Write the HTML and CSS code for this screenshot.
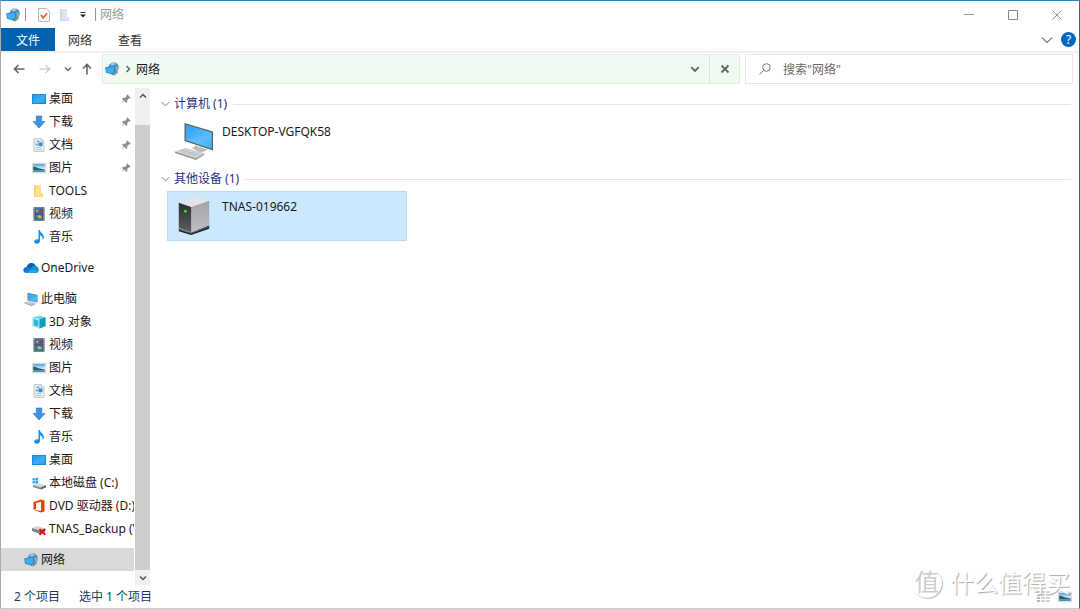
FILE: index.html
```html
<!DOCTYPE html>
<html lang="zh-CN">
<head>
<meta charset="utf-8">
<title>网络</title>
<link rel="stylesheet" href="styles.css">
</head>
<body>
<svg class="defs" aria-hidden="true">
  <defs>
    <linearGradient id="g-blue" x1="0" y1="0" x2="1" y2="1"><stop offset="0" stop-color="#1e96ea"/><stop offset=".5" stop-color="#35a9f6"/><stop offset="1" stop-color="#1787dc"/></linearGradient>
    <linearGradient id="g-screen" x1="0" y1="0" x2="1" y2="1"><stop offset="0" stop-color="#2f9ff4"/><stop offset=".6" stop-color="#55b8ff"/><stop offset="1" stop-color="#2a9cf0"/></linearGradient>
    <linearGradient id="g-front" x1="0" y1="0" x2="0" y2="1"><stop offset="0" stop-color="#2c2e30"/><stop offset="1" stop-color="#5c5e60"/></linearGradient>
    <linearGradient id="g-side" x1="0" y1="0" x2="0" y2="1"><stop offset="0" stop-color="#a3a4a8"/><stop offset="1" stop-color="#bdbec0"/></linearGradient>
    <linearGradient id="g-sky" x1="0" y1="0" x2="0" y2="1"><stop offset="0" stop-color="#4b9de0"/><stop offset=".6" stop-color="#dff2fb"/></linearGradient>
  </defs>
  <symbol id="network" viewBox="0 0 14 14">
    <circle cx="8.800" cy="5.400" r="5" fill="#5b93b3"/>
    <path d="m6 1.800 2-1 2.500.6-1.500 1.800-2.600.4z" fill="#a9cbd9"/>
    <path d="m10.500 5 2.500-.5.300 2.500-2 2z" fill="#7fb4cc"/>
    <path d="m8 10 4.500-1.200.5 1.700L9.500 13.500 6.500 12.800z" fill="#7c929e"/>
    <path d="m.2 5.600 9-2.200.8 6.200-2.600 3-6.400-1.800z" fill="#1b7cc4"/>
    <path d="m.9 6.200 7.700-1.900.7 5-2.300 2.500-5.500-1.500z" fill="#3eaef2"/>
  </symbol>
  <symbol id="desktop" viewBox="0 0 14 14"><path d="M0 2h14v10H0z" fill="#1180d3"/><path d="M.6 2.600h12.800v8.800H.6z" fill="url(#g-blue)"/><path d="M1 11 13 3v8z" fill="#55b9fa" opacity=".35"/></symbol>
  <symbol id="download" viewBox="0 0 14 14"><path d="M4.300 1h5.400v5.500H13L7 13 1 6.500h3.300z" fill="#3a94e0" stroke="#2477c5" stroke-width=".6"/></symbol>
  <symbol id="document" viewBox="0 0 14 14"><path d="M2 .6h7.300L12 3.300v10.100H2z" fill="#eef3f6" stroke="#a9b2b8" stroke-width=".7"/><path d="M9 1v3h3" fill="#dde3e7" stroke="#a9b2b8" stroke-width=".5"/><path d="M3.500 9.500h6M3.500 11.500h6" stroke="#a5b4bf" stroke-width=".7"/><path d="M6.500 4.500h4v3.700h-4z" fill="#348fc9"/><path d="M4.500 2.500h3v1.800h-3zM3.500 5.500H6v2H3.500z" fill="#67b2dd"/></symbol>
  <symbol id="picture" viewBox="0 0 14 14"><path d="M.3 2.200h13.400v9.600H.3z" fill="#fff" stroke="#b3b3b3" stroke-width=".6"/><path d="M1.200 3h11.600v8H1.200z" fill="url(#g-sky)"/><path d="M1.200 5.500c3 .3 4 1.900 11.600 3v1H1.200z" fill="#285d5c"/><path d="M1.200 9.200h11.600V11H1.200z" fill="#4793c9"/></symbol>
  <symbol id="folder" viewBox="0 0 14 14"><path d="M2 1h7v8.500h2V13H2z" fill="#f3cd68"/><path d="M3.300 1h5.700v8.500h1.500V13L3.300 12z" fill="#ffe08a"/></symbol>
  <symbol id="video" viewBox="0 0 14 14"><path d="M1.500.3h11v13.400h-11z" fill="#454b52"/><path d="M2.300 1v12M11.700 1v12" stroke="#d2d5d7" stroke-width=".9" stroke-dasharray="1.100 1"/><path d="M3.500 1h7v5.500h-7zM3.500 7.500h7V13h-7z" fill="#3b73c6"/><path d="m4 2.500 2.500 1L5 5.500zM5 9l3-1 2 2.500-3 1z" fill="#e3b240"/><path d="m7 3 3-1-.5 3.500-2 .5z" fill="#a93d29"/><path d="m3.500 11 3 0L8 13H3.500z" fill="#2b8a58"/></symbol>
  <symbol id="music" viewBox="0 0 14 14"><path d="M6.500 0h1.300c.5 3 4.200 4 4.200 7.200 0 1.200-.6 2.200-1.400 2.700.6-2.500-.6-3.700-2.600-4.600V11c0 1.600-1.400 2.800-3.200 2.800-1.600 0-2.700-.8-2.700-2 0-1.600 1.900-2.800 4.400-2.400z" fill="#1593ee"/></symbol>
  <symbol id="onedrive" viewBox="0 0 16 14"><path d="M3.500 7C3.500 4 6 2 8.500 2c2 0 3.600 1.200 4.200 3L10 9z" fill="#0864b8"/><path d="M3.800 12C1.500 12 .3 10.700.3 9c0-1.700 1.400-3.100 3.200-3.100 2 0 4.500 1.300 8 3.600L9 12z" fill="#1078d2"/><path d="M8.500 7c1-1.700 2.500-2.400 4-2.100C14.500 5 15.800 6.800 15.800 8.700c0 2-1.400 3.300-3.300 3.300H4z" fill="#1490df"/><path d="m4 12 5-3.500 6.300 2.500c-.6.700-1.500 1-2.800 1z" fill="#28a8ea"/></symbol>
  <symbol id="pc" viewBox="0 0 42 40"><path d="m11 1 30 9v20L11 20z" fill="#5b6267"/><path d="m12.300 2.800 27.400 8.400v17L12.300 19z" fill="url(#g-screen)"/><path d="m12.300 19 27.400-7v16.200z" fill="#78c7ff" opacity=".35"/><path d="m22 25 8 2.500v3L22 28z" fill="#848b8f"/><path d="m18 27 8-1 10 3-8 3.500z" fill="#b7bdc1"/><path d="m1 31 11-4 20 6-9 5.500z" fill="#d0d4d7"/><path d="m1 31 22 7 9-5v1.500L23 40 1 32.500z" fill="#92999e"/><path d="m5 31 8-2.500M9 32.500l8-2.700M14 34l8-2.700M19 35.500l7-3M8 29.800l18 5.500" stroke="#b0b6ba" stroke-width=".6"/></symbol>
  <symbol id="pc-small" viewBox="0 0 14 14"><path d="m3.500.8 10 2.200v7.500l-10-2.200z" fill="#5a7a90"/><path d="m4.100 1.500 8.800 2v6.300l-8.800-2z" fill="#3aa9f7"/><path d="m4.100 7.800 8.800-4.300v6.300z" fill="#74c6ff" opacity=".5"/><path d="m.3 10.500 4.200-1.700 7 2.300-3.700 2z" fill="#c6cdd2"/><path d="m.3 10.500 7.500 2.600 3.700-2v.8l-3.700 2L.3 11.300z" fill="#8d979e"/></symbol>
  <symbol id="cube" viewBox="0 0 14 14"><path d="M.5 2.500 7.500.5l6 1.800v8.900l-6 2.300-7-2z" fill="#6edbe5"/><path d="m.5 2.500 7 1.700v9.300l-7-2z" fill="#bceff4"/><path d="m1.600 4 4.800 1.200v6.600l-4.800-1.300z" fill="#33b8d4"/><path d="m7.500 4.200 6-1.900v8.900l-6 2.300z" fill="#0c9ec1"/></symbol>
  <symbol id="disk" viewBox="0 0 14 14"><path d="M.5 2.500 2.800 2v2.500H.5zM3.300 2l2.700-.5v3H3.300zM.5 5h2.300v2.500L.5 7.200zM3.300 5H6v3l-2.700-.4z" fill="#19b0e8"/><path d="m1 9 5-1.700 8 2L9 11.500z" fill="#d6d9db"/><path d="m1 9 8 2.500v2L1 11z" fill="#81878b"/><path d="m9 11.500 5-2.200v2l-5 2.200z" fill="#555c61"/></symbol>
  <symbol id="office" viewBox="0 0 14 14"><path d="M1.500 3 9 .5l3.500 1v11L9 13.500 1.500 11 9 11.800V2.700L4 4v6l-2.500 1z" fill="#e8420c"/></symbol>
  <symbol id="netdisk" viewBox="0 0 14 14"><path d="m0 6 5-2 8 2.500-5 2z" fill="#d4d6d8"/><path d="m0 6 8 2.500V12L0 9z" fill="#7e8286"/><path d="m8 8.500 5-2v3L8 12z" fill="#4d5256"/><path d="m7.500 7 5.800 5.800M13.300 7l-5.800 5.800" stroke="#e0151c" stroke-width="2"/></symbol>
  <symbol id="pin" viewBox="0 0 10 10"><path d="m6.200.3 3.500 3.500-1 .7-.7-.2L6.200 6.200l.1 1.700-1 1L3.200 6.800.4 9.600l2.100-3.400L1 4.700l1-.9 1.800.1L5.700 2l-.3-.8z" fill="#84919b"/></symbol>
  <symbol id="down" viewBox="0 0 8 8"><path d="m1 2.500 3 3 3-3" fill="none" stroke="currentColor" stroke-width="1.500"/></symbol>
  <symbol id="thin-down" viewBox="0 0 12 8"><path d="m1 1.500 5 5 5-5" fill="none" stroke="currentColor" stroke-width="1.300"/></symbol>
  <symbol id="arrow" viewBox="0 0 12 12"><path d="M11.500 6H1.500M5.500 2l-4 4 4 4" fill="none" stroke="currentColor" stroke-width="1.600"/></symbol>
  <symbol id="nas" viewBox="0 0 34 42"><path d="m1 34 13 4.500 19-8v4L14 41 1 37z" fill="#202224"/><path d="M1 7 20 1l13 4-19 6.500z" fill="#e5e5e8"/><path d="m14 11.500 19-6.500v26l-19 7z" fill="url(#g-side)"/><path d="m1 7 13 4.500V38L1 33.500z" fill="url(#g-front)"/><path d="m1 35 13 4 19-7" fill="none" stroke="#696b6d"/><circle cx="8" cy="16" r="1.500" fill="#24ef2c"/></symbol>
</svg>

<div class="window">
  <header class="titlebar">
    <svg class="ico"><use href="#network"/></svg>
    <i class="bar first"></i>
    <button class="flat quick" aria-label="属性"><svg class="ico" viewBox="0 0 14 14"><path d="M1.500.5h8l3 3v10h-11z" fill="#fbfbfb" stroke="#a8a8a8" stroke-width=".8"/><path d="m4 7 2.200 2.800 4-4.600" fill="none" stroke="#e8642b" stroke-width="1.700"/></svg></button>
    <button class="flat quick" aria-label="新建文件夹"><svg class="ico" viewBox="0 0 14 14"><path d="M2 1h7v8.500h2V13H2z" fill="#c9d6ea"/><path d="M3.500 1H9v8.500h1.500V13l-7-1z" fill="#dbe4f3"/></svg></button>
    <button class="flat quick menu" aria-label="自定义快速访问工具栏"><svg viewBox="0 0 8 8"><path d="M1.500 1.500h5" stroke="#333"/><path d="M1 3.500h6L4 6.500z" fill="#222"/></svg></button>
    <i class="bar"></i>
    <h1>网络</h1>
    <div class="controls">
      <button class="flat" aria-label="最小化"><svg viewBox="0 0 10 10"><path d="M0 4.500h10" stroke="#999"/></svg></button>
      <button class="flat" aria-label="最大化"><svg viewBox="0 0 10 10"><path d="M.5.5h9v9h-9z" fill="none" stroke="#888"/></svg></button>
      <button class="flat" aria-label="关闭"><svg viewBox="0 0 10 10"><path d="m.5.5 9 9M9.500.5l-9 9" stroke="#888" stroke-width=".9"/></svg></button>
    </div>
  </header>

  <nav class="ribbon">
    <button class="tab file">文件</button><button class="tab">网络</button><button class="tab">查看</button>
    <div class="ribbon-end">
      <button class="flat" aria-label="展开功能区"><svg class="expand"><use href="#thin-down"/></svg></button>
      <button class="help" aria-label="帮助">?</button>
    </div>
  </nav>

  <div class="toolbar">
    <div class="history">
      <button class="flat back" aria-label="后退"><svg><use href="#arrow"/></svg></button>
      <button class="flat forward" aria-label="前进" disabled><svg><use href="#arrow"/></svg></button>
      <button class="flat recent" aria-label="最近浏览的位置"><svg><use href="#down"/></svg></button>
      <button class="flat up" aria-label="上移"><svg><use href="#arrow"/></svg></button>
    </div>
    <div class="address">
      <svg class="ico"><use href="#network"/></svg>
      <svg class="crumb-arrow"><use href="#down"/></svg>
      <a href="#network">网络</a>
      <button class="flat drop" aria-label="以前的位置"><svg><use href="#down"/></svg></button>
      <button class="flat stop" aria-label="停止"><svg viewBox="0 0 10 10"><path d="m1.500 1.500 7 7M8.500 1.500l-7 7" stroke="#666" stroke-width="1.800"/></svg></button>
    </div>
    <label class="search">
      <svg viewBox="0 0 12 12"><circle cx="7.500" cy="4.500" r="3.800" fill="none" stroke="#777"/><path d="m4.800 7.200-4.300 4.300" stroke="#777"/></svg>
      <input type="text" placeholder="搜索&quot;网络&quot;" aria-label="搜索网络">
    </label>
  </div>

  <div class="body">
    <nav class="sidebar">
      <div class="tree">
        <ul>
          <li><a href="#"><svg class="ico"><use href="#desktop"/></svg>桌面<svg class="pin"><use href="#pin"/></svg></a></li>
          <li><a href="#"><svg class="ico"><use href="#download"/></svg>下载<svg class="pin"><use href="#pin"/></svg></a></li>
          <li><a href="#"><svg class="ico"><use href="#document"/></svg>文档<svg class="pin"><use href="#pin"/></svg></a></li>
          <li><a href="#"><svg class="ico"><use href="#picture"/></svg>图片<svg class="pin"><use href="#pin"/></svg></a></li>
          <li><a href="#"><svg class="ico"><use href="#folder"/></svg>TOOLS</a></li>
          <li><a href="#"><svg class="ico"><use href="#video"/></svg>视频</a></li>
          <li><a href="#"><svg class="ico"><use href="#music"/></svg>音乐</a></li>
        </ul>
        <ul><li class="root"><a href="#"><svg class="ico cloud"><use href="#onedrive"/></svg>OneDrive</a></li></ul>
        <ul>
          <li class="root"><a href="#"><svg class="ico"><use href="#pc-small"/></svg>此电脑</a></li>
          <li><a href="#"><svg class="ico"><use href="#cube"/></svg>3D 对象</a></li>
          <li><a href="#"><svg class="ico"><use href="#video"/></svg>视频</a></li>
          <li><a href="#"><svg class="ico"><use href="#picture"/></svg>图片</a></li>
          <li><a href="#"><svg class="ico"><use href="#document"/></svg>文档</a></li>
          <li><a href="#"><svg class="ico"><use href="#download"/></svg>下载</a></li>
          <li><a href="#"><svg class="ico"><use href="#music"/></svg>音乐</a></li>
          <li><a href="#"><svg class="ico"><use href="#desktop"/></svg>桌面</a></li>
          <li><a href="#"><svg class="ico"><use href="#disk"/></svg>本地磁盘 (C:)</a></li>
          <li><a href="#"><svg class="ico"><use href="#office"/></svg>DVD 驱动器 (D:)</a></li>
          <li><a href="#"><svg class="ico"><use href="#netdisk"/></svg>TNAS_Backup (\</a></li>
        </ul>
        <ul><li class="root current"><a href="#" aria-current="page"><svg class="ico"><use href="#network"/></svg>网络</a></li></ul>
      </div>
      <div class="scroll">
        <button class="flat scroll-up" aria-label="向上滚动"><svg><use href="#down"/></svg></button>
        <div class="thumb"></div>
        <button class="flat" aria-label="向下滚动"><svg><use href="#down"/></svg></button>
      </div>
    </nav>

    <main>
      <section>
        <h2><svg><use href="#thin-down"/></svg>计算机 (1)</h2>
        <button class="item"><svg class="big"><use href="#pc"/></svg><span>DESKTOP-VGFQK58</span></button>
      </section>
      <section>
        <h2><svg><use href="#thin-down"/></svg>其他设备 (1)</h2>
        <button class="item selected"><svg class="big"><use href="#nas"/></svg><span>TNAS-019662</span></button>
      </section>
    </main>
  </div>

  <footer>
    <span>2 个项目</span><span>选中 1 个项目</span>
    <div class="views">
      <button class="flat" aria-label="详细信息"><svg class="ico" viewBox="0 0 14 14"><path d="M1 2h3M1 5h3M1 8h3M1 11h3" stroke="#b59b91" stroke-width="1.500"/><path d="M5 2h4M10 2h4M5 5h4M10 5h4M5 8h4M10 8h4M5 11h4M10 11h4" stroke="#a9a9a9"/></svg></button>
      <button class="flat" aria-label="大缩略图"><svg class="ico"><use href="#picture"/></svg></button>
    </div>
  </footer>
  <div class="watermark"><span class="seal">值</span><span>什么值得买</span></div>
</div>
</body>
</html>
```
FILE: styles.css
```css
* { box-sizing: border-box; }
body {
  margin: 0;
  background: #fff;
  color: #1a1a1a;
  font: 12px/16px "Noto Sans", "Noto Sans CJK SC", sans-serif;
}
.defs { position: absolute; width: 0; height: 0; }
.window {
  position: relative;
  display: flex;
  flex-direction: column;
  min-height: 100vh;
  border: 1px solid #c8ccd0;
  border-top-color: #2585c4;
  border-left-color: #aaa;
  border-right-color: #2d68b4;
}
svg { display: block; flex: none; }
button, input { font: inherit; color: inherit; }
button { padding: 0; border: 0; background: none; }
a { color: inherit; text-decoration: none; }
ul { margin: 0; padding: 0; list-style: none; }
.ico { width: 14px; height: 14px; }
.flat { display: grid; place-items: center; }

.titlebar { display: flex; align-items: center; height: 27px; padding-left: 5px; }
.titlebar h1 { margin: 0 0 0 4px; font-size: 12px; font-weight: 400; color: #999; }
.bar { width: 1px; height: 13px; background: #999; }
.bar.first { margin: 0 7px 0 5px; }
.quick { width: 21px; height: 20px; }
.quick.menu { width: 16px; margin-right: 4px; }
.quick.menu svg { width: 8px; height: 8px; }
.controls { display: flex; margin-left: auto; }
.controls button { width: 44px; height: 26px; }
.controls svg { width: 10px; height: 10px; }

.ribbon { display: flex; align-items: center; height: 25px; border-bottom: 2px solid #f0f0f0; }
.tab { width: 50px; height: 23px; padding-top: 2px; color: #333; }
.tab.file { width: 54px; background: #0063b1; color: #fff; }
.ribbon-end { display: flex; align-items: center; gap: 8px; margin-left: auto; padding-right: 3px; }
.expand { width: 12px; height: 8px; color: #888; }
.help { width: 15px; height: 15px; border-radius: 50%; background: #0067c0; color: #fff; line-height: 15px; }

.toolbar { display: flex; gap: 5px; height: 34px; padding: 1px 6px 3px 0; color: #666; }
.history { display: flex; align-items: center; width: 96px; padding-left: 5px; }
.history .flat { width: 27px; height: 24px; }
.history svg { width: 12px; height: 12px; }
.history .recent { width: 20px; }
.history .up { width: 20px; }
.forward { color: #d0d0d0; }
.forward svg { transform: rotate(180deg); }
.up svg { transform: rotate(90deg); }
.history .recent svg { width: 8px; height: 8px; }
.address { display: flex; flex: 1; align-items: center; padding-left: 2px; border: 1px solid #e5ebe6; background: #effaf1; }
.address a { margin-left: 4px; padding-top: 2px; color: #1a1a1a; }
.crumb-arrow { width: 8px; height: 8px; margin-left: 5px; transform: rotate(-90deg); }
.address .drop { width: 29px; height: 100%; margin-left: auto; }
.address .drop svg, .address .stop svg { width: 10px; height: 10px; }
.address .stop { width: 30px; height: 100%; border-left: 1px solid #dce5de; }
.search { display: flex; width: 31%; max-width: 328px; align-items: center; gap: 12px; padding-left: 13px; border: 1px solid #e5e5e5; }
.search svg { width: 12px; height: 12px; }
.search input { flex: 1; min-width: 0; padding: 2px 0 0; border: 0; outline: 0; background: none; }
.search input::placeholder { color: #6a6a6a; opacity: 1; }

.body { display: flex; flex: 1; }
.sidebar { display: flex; width: 149px; }
.tree { flex: 1; min-width: 0; margin-right: 1px; }
.tree ul + ul { margin-top: 8px; }
.tree a { display: flex; align-items: center; gap: 3px; height: 23px; padding-left: 31px; overflow: hidden; white-space: nowrap; }
.tree .root a { padding-left: 23px; }
.tree .current { background: #d9d9d9; }
.cloud { width: 16px; margin: 0 -1px; }
.pin { width: 10px; height: 10px; margin: 0 3px 0 auto; }
.scroll { display: flex; flex-direction: column; width: 15px; margin-top: 1px; background: #f0f0f0; color: #555; }
.scroll .flat { width: 15px; height: 15px; }
.scroll svg { width: 8px; height: 8px; }
.scroll-up svg { transform: rotate(180deg); }
.thumb { flex: 1; margin-top: 22px; background: #cdcdcd; }

main { flex: 1; padding: 9px 8px 0 11px; }
h2 { display: flex; align-items: center; gap: 4px; height: 16px; margin: 0; color: #1e3287; font-size: 12px; font-weight: 400; }
h2 svg { width: 9px; height: 6px; color: #777; }
h2::after { content: ""; flex: 1; height: 1px; margin-left: 2px; background: #e5e5e5; }
section + section { margin-top: 5px; }
.item { display: flex; gap: 8px; width: 240px; height: 50px; margin: 4px 0 0 6px; padding: 4px 6px; border: 1px solid transparent; text-align: left; }
.item.selected { border-color: #b5dcfa; background: #cce8ff; }
.big { width: 40px; height: 40px; }
.item span { padding-top: 3px; }

footer { display: flex; align-items: center; gap: 19px; height: 23px; padding: 1px 7px 0 13px; color: #1e395b; }
.views { display: flex; gap: 8px; margin-left: auto; }

.watermark { position: absolute; right: 9px; bottom: 9px; display: flex; align-items: center; gap: 8px; color: #fff; font-size: 24px; line-height: 32px; text-shadow: 1px 1px 1px #aaa; pointer-events: none; }
.seal { width: 30px; height: 30px; border-radius: 50%; box-shadow: 1px 1px 1px #bbb; font-size: 24px; line-height: 28px; text-align: center; color: #ccc; text-shadow: none; }
```
